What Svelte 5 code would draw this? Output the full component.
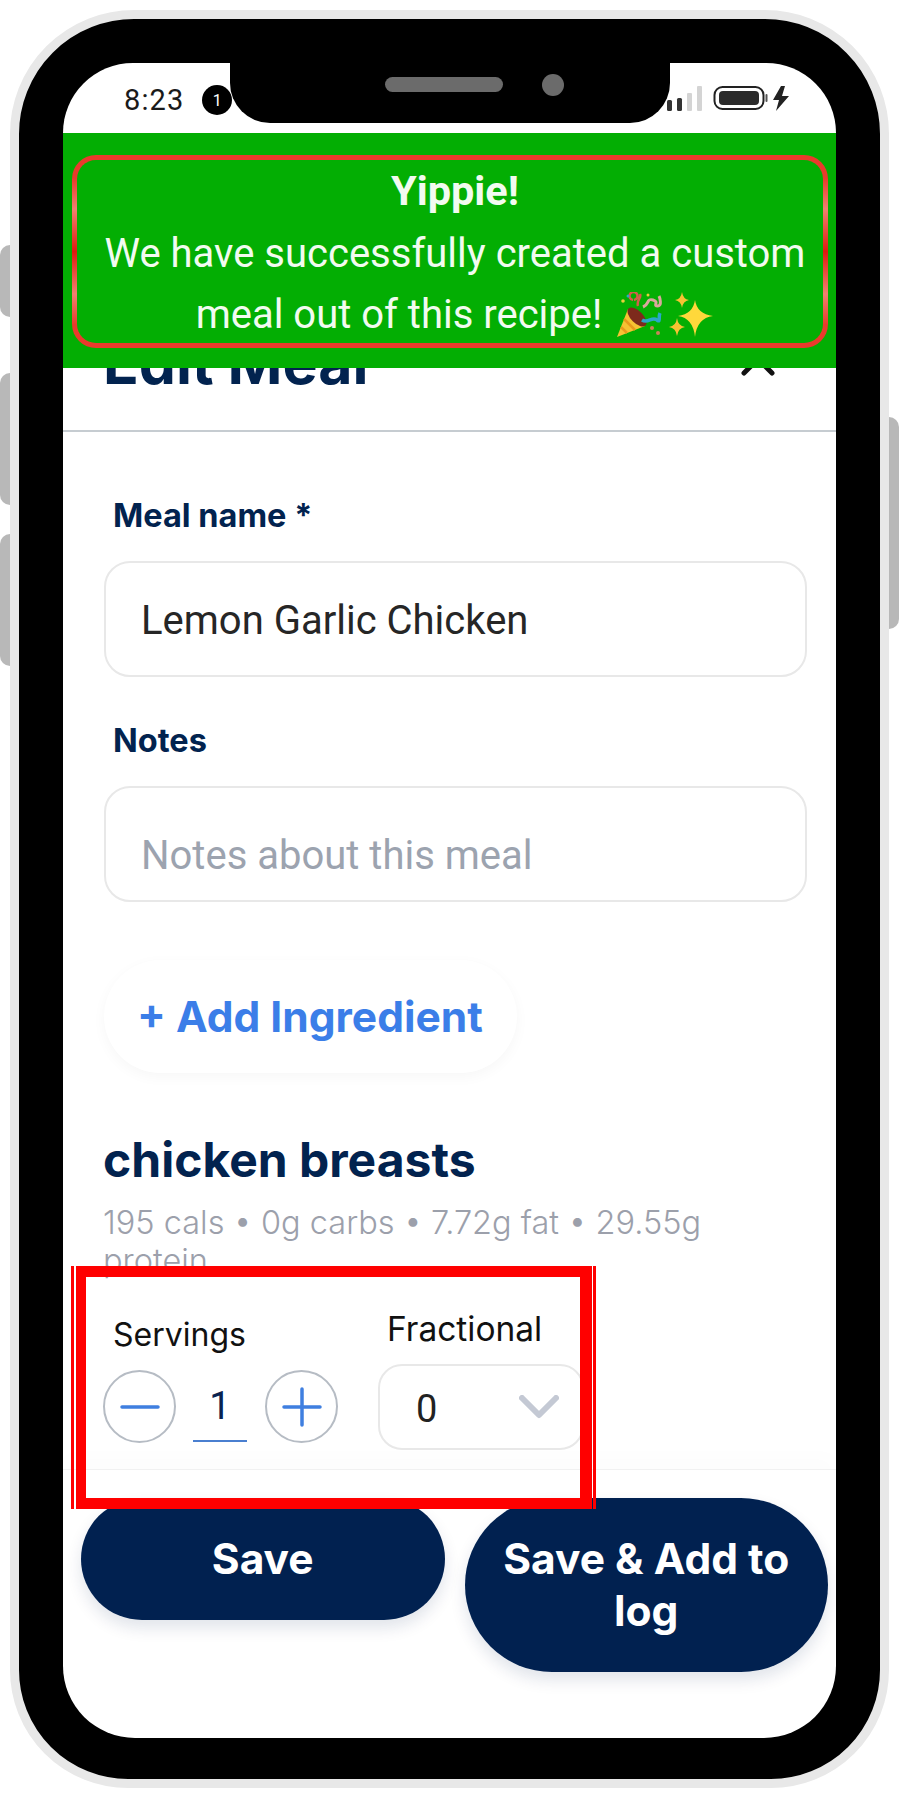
<script>
  const sideLeft = [
    { top: 245, height: 72 },
    { top: 373, height: 132 },
    { top: 534, height: 132 }
  ];
</script>

<div class="frame">
  {#each sideLeft as b}
    <div class="side side-left" style="top:{b.top}px;height:{b.height}px"></div>
  {/each}
  <div class="side side-right"></div>

  <div class="device">
    <div class="screen">
      <div class="status">
        <div class="status-left">
          <span class="time">8:23</span>
          <span class="badge">1</span>
        </div>
        <svg class="status-icons" width="126" height="28" viewBox="0 0 126 28" aria-hidden="true">
          <rect x="0" y="16" width="5" height="11" rx="1.5" fill="#333" />
          <rect x="10" y="14" width="5" height="13" rx="1.5" fill="#333" />
          <rect x="20" y="9" width="5" height="18" rx="1" fill="#d4d4d4" />
          <rect x="30" y="2" width="5" height="25" rx="1" fill="#d4d4d4" />
          <rect x="47.5" y="3" width="49" height="22" rx="8" fill="none" stroke="#222" stroke-width="2" />
          <rect x="52" y="7" width="40" height="14" rx="4" fill="#2b2b2b" />
          <rect x="98.500" y="10" width="2" height="8" rx="1" fill="#555" />
          <path d="M116 2 L108 16 H114 L111 27 L124 12 H117 L120 2 Z" fill="#222" transform="translate(-2 0)" />
        </svg>
      </div>

      <header class="head">
        <h1>Edit Meal</h1>
        <svg class="close" width="34" height="34" viewBox="0 0 34 34" aria-hidden="true">
          <path d="M3 3 L31 31 M31 3 L3 31" stroke="#111" stroke-width="5" stroke-linecap="round" />
        </svg>
      </header>

      <div class="form">
        <div class="field">
          <div class="label">Meal name *</div>
          <div class="input">Lemon Garlic Chicken</div>
        </div>
        <div class="field">
          <div class="label">Notes</div>
          <div class="input placeholder">Notes about this meal</div>
        </div>
        <div class="add">+ Add Ingredient</div>
        <h2>chicken breasts</h2>
        <p class="macros">195 cals • 0g carbs • 7.72g fat • 29.55g protein</p>

        <div class="qty">
          <div class="servings">
            <div class="qty-label sv">Servings</div>
            <div class="stepper">
              <div class="circle">
                <svg width="40" height="40" viewBox="0 0 40 40" aria-hidden="true"><path d="M2 20 H38" stroke="#3f7fe0" stroke-width="3.500" stroke-linecap="round" /></svg>
              </div>
              <div class="count">1</div>
              <div class="circle">
                <svg width="40" height="40" viewBox="0 0 40 40" aria-hidden="true"><path d="M2 20 H38 M20 2 V38" stroke="#3f7fe0" stroke-width="3.500" stroke-linecap="round" /></svg>
              </div>
            </div>
          </div>
          <div class="fractional">
            <div class="qty-label fr">Fractional</div>
            <div class="select">
              <span>0</span>
              <svg width="40" height="24" viewBox="0 0 40 24" aria-hidden="true"><path d="M3 3 L20 20 L37 3" fill="none" stroke="#c4c9d4" stroke-width="6" stroke-linecap="round" stroke-linejoin="round" /></svg>
            </div>
          </div>
        </div>
      </div>

      <footer class="foot">
        <div class="btn">Save</div>
        <div class="btn">Save &amp; Add to log</div>
      </footer>

      <div class="toast">
        <div class="toast-inner">
          <strong>Yippie!</strong>
          <span>We have successfully created a custom</span>
          <span class="last">meal out of this recipe!
            <svg class="emoji" width="46" height="46" viewBox="0 0 46 46" aria-hidden="true">
              <path d="M1 45 L12 17 L29 34 Z" fill="#f6c233" />
              <path d="M5 35 L11 41 M8 27 L19 38" stroke="#e89a1c" stroke-width="2.500" />
              <ellipse cx="21" cy="25" rx="6" ry="12" transform="rotate(-45 21 25)" fill="#7d2a1c" />
              <path d="M22 14 C20 8 26 6 24 2 M17 8 a4 4 0 1 1 1 0" fill="none" stroke="#d1604a" stroke-width="2.500" />
              <path d="M27 15 C34 12 30 6 37 8 C44 10 36 14 42 14 C46 14 44 6 43 4" fill="none" stroke="#d9a79c" stroke-width="3" />
              <path d="M26 28 C32 32 36 24 41 28 C45 31 42 25 44 21" fill="none" stroke="#2aa7c9" stroke-width="3.500" />
              <circle cx="7" cy="9" r="1.800" fill="#e9d13a" />
              <circle cx="12" cy="4" r="1.500" fill="#2aa7c9" />
              <circle cx="36" cy="36" r="2" fill="#c9825a" />
              <circle cx="42" cy="41" r="2" fill="#c9825a" />
              <circle cx="32" cy="3" r="1.500" fill="#e9d13a" />
            </svg><svg class="emoji spark" width="46" height="46" viewBox="0 0 46 46" aria-hidden="true">
              <path d="M27 8 Q29 22 45 24 Q29 26 27 45 Q25 26 10 24 Q25 22 27 8 Z" fill="#ffd83b" />
              <path d="M14 0 Q15 7 21 8 Q15 9 14 16 Q13 9 7 8 Q13 7 14 0 Z" fill="#f6c233" />
              <path d="M9 26 Q10 34 17 35 Q10 36 9 44 Q8 36 1 35 Q8 34 9 26 Z" fill="#f6c233" />
            </svg>
          </span>
        </div>
      </div>
      <div class="notch">
        <div class="speaker"></div>
        <div class="camera"></div>
      </div>
    </div>
  </div>

  <div class="mark"><div class="mark-box"></div></div>
</div>

<style>
  :global(body) {
    margin: 0;
    background: #fff;
  }
  .frame {
    position: relative;
    box-sizing: border-box;
    width: 900px;
    height: 1800px;
    padding: 10px 11px 12px 10px;
    font-family: Inter, "Liberation Sans", sans-serif;
    overflow: hidden;
  }
  .side {
    position: absolute;
    background: #b8b8b8;
  }
  .side-left {
    left: 0;
    width: 10px;
    border-radius: 10px 0 0 10px;
  }
  .side-right {
    top: 417px;
    left: 889px;
    width: 10px;
    height: 212px;
    border-radius: 0 10px 10px 0;
  }
  .device {
    box-sizing: border-box;
    height: 100%;
    padding: 44px 44px 41px 44px;
    background: #000;
    border: 9px solid #e8e8e8;
    border-radius: 124px 124px 118px 118px;
  }
  .screen {
    position: relative;
    display: flex;
    flex-direction: column;
    height: 100%;
    overflow: hidden;
    background: #fff;
    border-radius: 70px 70px 72px 72px;
  }
  .status {
    display: flex;
    flex: none;
    align-items: flex-start;
    justify-content: space-between;
    height: 70px;
    padding: 22px 43px 0 61px;
    box-sizing: border-box;
  }
  .status-left {
    display: flex;
    align-items: center;
    gap: 18px;
  }
  .time {
    font-family: Roboto, sans-serif;
    font-size: 29px;
    line-height: 24px;
    letter-spacing: 1.1px;
    color: #1a1a1a;
  }
  .badge {
    display: flex;
    align-items: center;
    justify-content: center;
    width: 30px;
    height: 30px;
    border-radius: 50%;
    background: #000;
    color: #fff;
    font-family: Roboto, sans-serif;
    font-size: 16px;
  }
  .status-icons {
    margin-top: -1px;
  }
  .notch {
    position: absolute;
    top: 0;
    left: 167px;
    width: 440px;
    height: 60px;
    background: #000;
    border-radius: 0 0 40px 40px;
  }
  .speaker {
    position: absolute;
    top: 14px;
    left: 155px;
    width: 118px;
    height: 15px;
    border-radius: 8px;
    background: #6b6b6b;
  }
  .camera {
    position: absolute;
    top: 11px;
    left: 312px;
    width: 22px;
    height: 22px;
    border-radius: 50%;
    background: #6b6b6b;
  }
  .toast {
    position: absolute;
    top: 70px;
    left: 0;
    right: 0;
    box-sizing: border-box;
    height: 235px;
    padding: 22px 8px 20px 9px;
    background: #03ae03;
  }
  .toast-inner {
    box-sizing: border-box;
    display: flex;
    flex-direction: column;
    align-items: center;
    height: 100%;
    border: 5px solid transparent;
    border-radius: 24px;
    background:
      linear-gradient(#03ae03, #03ae03) padding-box,
      linear-gradient(#ea3a2c 0%, #ea3a2c 12%, #f28070 28%, #e01a10 50%, #f28070 72%, #ea3a2c 88%, #ea3a2c 100%) border-box;
    color: #f2fbf0;
    font-family: Roboto, sans-serif;
    font-size: 40px;
    line-height: 61px;
    text-align: center;
    white-space: nowrap;
    padding-top: 2px;
    padding-left: 10px;
  }
  .toast-inner strong {
    margin: -2px 0 2px;
    font-size: 41.500px;
    font-weight: 700;
  }
  .last {
    display: flex;
    align-items: center;
    gap: 14px;
  }
  .emoji {
    flex: none;
  }
  .spark {
    margin-left: -8px;
  }
  .head {
    display: flex;
    flex: none;
    align-items: flex-start;
    justify-content: space-between;
    height: 299px;
    box-sizing: border-box;
    padding: 198px 61px 0 40px;
    border-bottom: 2px solid #c6ccd1;
  }
  .head h1 {
    margin: 0;
    font-size: 59px;
    font-weight: 700;
    line-height: 64px;
    color: #02234f;
  }
  .close {
    margin-top: 11px;
  }
  .form {
    flex: none;
    padding: 67px 29px 0 41px;
  }
  .field {
    margin-bottom: 47px;
  }
  .label {
    padding-left: 9px;
    margin-bottom: 28px;
    font-size: 32.500px;
    font-weight: 700;
    line-height: 34px;
    color: #02234f;
  }
  .input {
    box-sizing: border-box;
    height: 116px;
    padding: 0 35px;
    border: 2px solid #e8e8e8;
    border-radius: 26px;
    font-family: Roboto, sans-serif;
    font-size: 40px;
    line-height: 116px;
    color: #262626;
  }
  .placeholder {
    color: #9ca3af;
    line-height: 136px;
  }
  .add {
    display: inline-block;
    margin-top: 11px;
    box-sizing: border-box;
    width: 413px;
    height: 113px;
    padding-left: 33px;
    border-radius: 57px;
    background: #fff;
    box-shadow: 0 4px 14px rgba(0, 0, 0, 0.035);
    font-size: 42.500px;
    font-weight: 700;
    line-height: 113px;
    color: #3b7ee8;
  }
  h2 {
    margin: 61px 0 0 -1px;
    font-size: 48px;
    font-weight: 700;
    line-height: 52px;
    color: #02234f;
  }
  .macros {
    margin: 18px 0 0 -1px;
    font-size: 32.500px;
    font-weight: 300;
    line-height: 38px;
    color: #9ca0ab;
  }
  .qty {
    display: flex;
    gap: 40px;
    align-items: flex-start;
    width: 580px;
    margin-left: -1px;
  }
  .qty-label {
    font-size: 32px;
    line-height: 36px;
    color: #111;
  }
  .sv {
    padding-left: 10px;
  }
  .fr {
    padding-left: 9px;
    font-size: 33.500px;
  }
  .servings {
    padding-top: 37px;
  }
  .fractional {
    padding-top: 31px;
  }
  .stepper {
    display: flex;
    align-items: center;
    margin-top: 17px;
  }
  .circle {
    box-sizing: border-box;
    display: flex;
    align-items: center;
    justify-content: center;
    width: 73px;
    height: 73px;
    border: 2px solid #b6bcc4;
    border-radius: 50%;
  }
  .count {
    box-sizing: border-box;
    width: 54px;
    height: 70px;
    margin: 0 18px 0 17px;
    border-bottom: 2px solid #4a7fd0;
    font-family: Roboto, sans-serif;
    font-size: 38px;
    line-height: 68px;
    text-align: center;
    color: #0a2350;
  }
  .select {
    box-sizing: border-box;
    display: flex;
    align-items: center;
    justify-content: space-between;
    width: 206px;
    height: 86px;
    margin-top: 17px;
    padding: 3px 23px 0 36px;
    border: 2px solid #e8e8e8;
    border-radius: 24px;
    font-family: Roboto, sans-serif;
    font-size: 38px;
    color: #222;
  }
  .select svg {
    margin-top: -3px;
  }
  .foot {
    display: flex;
    flex: 1;
    align-items: flex-start;
    gap: 20px;
    margin-top: 19px;
    padding: 28px 8px 0 18px;
    border-top: 1px solid #f1f1f1;
    box-shadow: 0 -14px 18px rgba(0, 0, 0, 0.012);
  }
  .btn {
    flex: 1;
    box-sizing: border-box;
    padding: 35px 30px;
    border-radius: 90px;
    background: #012150;
    box-shadow: 0 8px 16px rgba(1, 33, 80, 0.12);
    color: #fff;
    font-size: 42.500px;
    font-weight: 700;
    line-height: 52px;
    text-align: center;
  }
  .mark {
    position: absolute;
    top: 1266px;
    left: 71px;
    box-sizing: border-box;
    width: 525px;
    height: 243px;
    padding: 0 1px 0 2px;
    border-left: 3px solid #f00;
    border-right: 3px solid #f00;
  }
  .mark-box {
    box-sizing: border-box;
    height: 100%;
    border-style: solid;
    border-color: #f00;
    border-width: 11px 12px 11px 10px;
  }
</style>
